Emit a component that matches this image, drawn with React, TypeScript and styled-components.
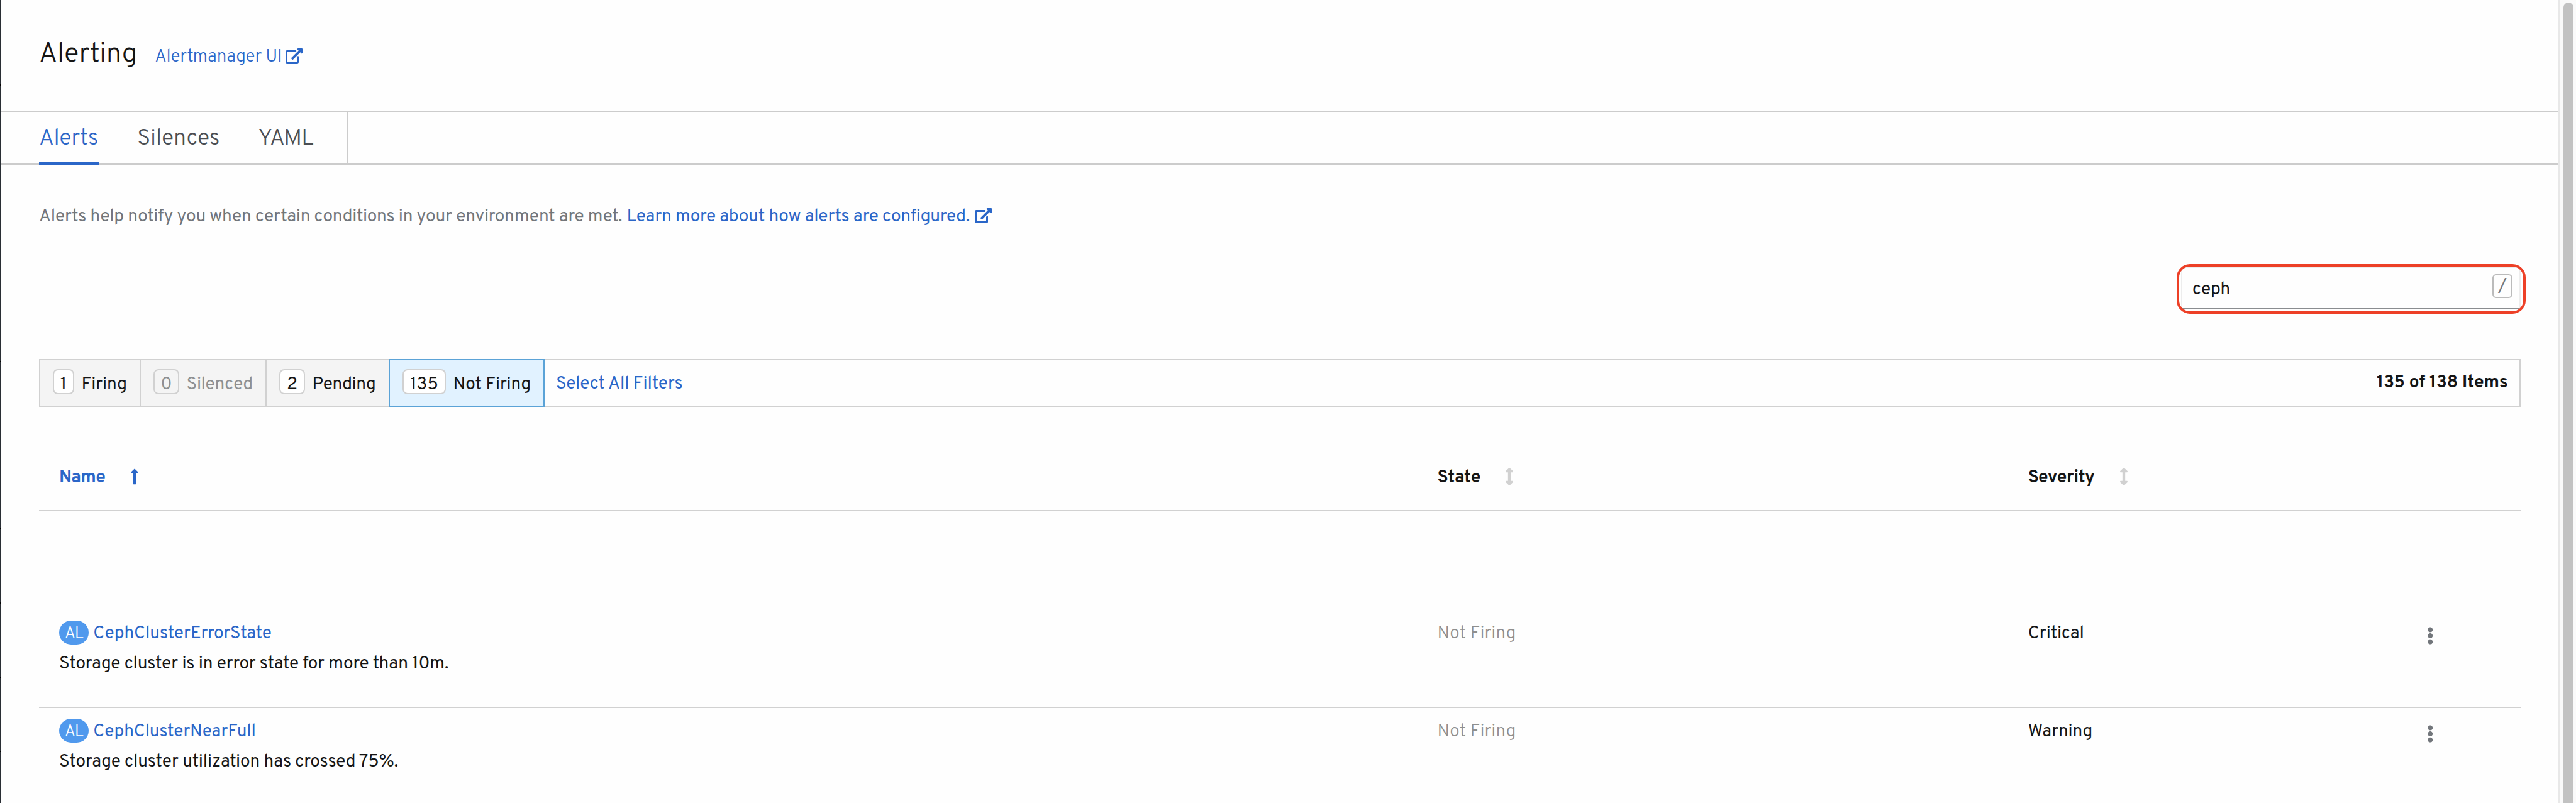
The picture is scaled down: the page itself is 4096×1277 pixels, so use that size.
import React from 'react';
import styled, { createGlobalStyle, css } from 'styled-components';
import { FaArrowsAltV, FaEllipsisV, FaLongArrowAltUp } from 'react-icons/fa';

const color = {
  text: '#151515',
  link: '#2a66c8',
  muted: '#72767b',
  line: '#d1d1d1',
};

const GlobalStyle = createGlobalStyle`
  *, *::before, *::after { box-sizing: border-box; }
  html { overflow: hidden; }
  body {
    margin: 0;
    overflow: hidden;
    background: #fefefe;
    color: ${color.text};
    font-family: Overpass, Roboto, sans-serif;
    font-size: 28px;
    line-height: 40px;
  }
`;

const Page = styled.div`
  display: flex;
  width: 4096px;
  height: 1277px;
  overflow: hidden;
`;

const NavEdge = styled.div`
  display: flex;
  flex-direction: column;
  width: 2px;
  background: #292e34;
`;

const NavDivider = styled.i<{ $gap: number }>`
  height: 2px;
  margin-top: ${p => p.$gap}px;
  background: #030303;
`;

const Main = styled.main`
  flex: 1;
  min-width: 0;
`;

const ScrollTrack = styled.div`
  width: 28px;
  padding: 4px 4px 0 6px;
  border-left: 2px solid #e8e8e8;
  background: #fafafa;
`;

const ScrollThumb = styled.div`
  height: 100%;
  border-radius: 8px 8px 0 0;
  background: #c2c2c2;
`;

const Text = styled.span<{ $track?: number }>`
  white-space: nowrap;
  letter-spacing: ${p => p.$track ?? 0}px;
`;

const Link = styled.a<{ $track?: number; $light?: boolean }>`
  white-space: nowrap;
  color: ${color.link};
  text-decoration: none;
  letter-spacing: ${p => p.$track ?? 0}px;
  font-weight: ${p => (p.$light ? 300 : 400)};
`;

const Header = styled.header`
  display: flex;
  align-items: baseline;
  height: 176px;
  padding: 57px 0 0 60px;
`;

const Title = styled.h1`
  margin: 0 28px 0 0;
  font-size: 44px;
  font-weight: 300;
  line-height: 60px;
  letter-spacing: -0.29px;
`;

const ExternalSvg = styled.svg<{ $gap: number }>`
  width: 27px;
  height: 24px;
  margin-left: ${p => p.$gap}px;
  vertical-align: -3px;
  fill: currentColor;
`;

const ExternalIcon = ({ gap }: { gap: number }) => (
  <ExternalSvg $gap={gap} viewBox="0 0 576 512">
    <path d="M576 24v127.984c0 21.461-25.96 31.98-40.971 16.971l-35.707-35.709-243.523 243.523c-9.373 9.373-24.568 9.373-33.941 0l-22.627-22.627c-9.373-9.373-9.373-24.569 0-33.941L442.756 76.676l-35.703-35.705C391.982 25.9 402.656 0 424.024 0H552c13.255 0 24 10.745 24 24zM407.029 270.794l-16 16A23.999 23.999 0 0 0 384 303.765V448H64V128h264a24.003 24.003 0 0 0 16.97-7.029l16-16C376.089 89.851 365.381 64 344 64H48C21.49 64 0 85.49 0 112v352c0 26.51 21.49 48 48 48h352c26.51 0 48-21.49 48-48V287.764c0-21.382-25.852-32.09-40.971-16.97z" />
  </ExternalSvg>
);

const Tabs = styled.nav`
  display: flex;
  height: 86px;
  padding-left: 60px;
  border-top: 2px solid #ccc;
  border-bottom: 2px solid #ccc;
`;

const Tab = styled.div<{ $active?: boolean; $width: number; $track: number }>`
  width: ${p => p.$width}px;
  height: 84px;
  margin-right: 60px;
  padding-top: 23px;
  font-size: 36px;
  font-weight: 350;
  letter-spacing: ${p => p.$track}px;
  white-space: nowrap;
  color: #4b4e53;
  ${p => p.$active && css`
    color: ${color.link};
    border-bottom: 4px solid ${color.link};
  `}
`;

const TabsEnd = styled.div`
  width: 2px;
  margin-left: -10px;
  background: #ccc;
`;

const Content = styled.section`
  padding: 63px 60px 0 60px;
`;

const Help = styled.p`
  display: flex;
  align-items: baseline;
  gap: 7.4px;
  height: 40px;
  margin: 0;
  color: ${color.muted};
`;

const SearchRow = styled.div`
  display: flex;
  justify-content: flex-end;
  padding-top: 59px;
  margin-bottom: 79px;
`;

const SearchBox = styled.div`
  position: relative;
  display: flex;
  align-items: flex-start;
  justify-content: space-between;
  width: 540px;
  height: 68px;
  padding: 10px 11px 0 16px;
  border: 2px solid #ededed;
  border-bottom-color: #8a8d90;
`;

const Query = styled.span`
  padding-top: 5px;
  letter-spacing: -0.3px;
`;

const SearchOutline = styled.div`
  position: absolute;
  inset: -6px -10px -9px -9px;
  border: 4px solid #ed4027;
  border-radius: 21px;
`;

const KeyHint = styled.kbd`
  width: 32px;
  height: 38px;
  border: 2px solid #bbb;
  border-radius: 6px;
  font: inherit;
  line-height: 36px;
  text-align: center;
  color: ${color.muted};
`;

const FilterBar = styled.div`
  display: flex;
  height: 76px;
  border: 2px solid ${color.line};
`;

const Filter = styled.div<{ $width: number; $selected?: boolean; $disabled?: boolean; $last?: boolean }>`
  display: flex;
  width: ${p => p.$width}px;
  padding: 14px 0 0 20px;
  background: #f4f4f4;
  border-right: ${p => (p.$last ? 0 : 2)}px solid ${color.line};
  color: ${p => (p.$disabled ? '#8e9092' : color.text)};
  ${p => p.$selected && css`
    margin: -2px 0;
    border: 2px solid #5ba3d7;
    background: #e1f2ff;
  `}
`;

const Count = styled.span<{ $width: number; $disabled?: boolean }>`
  width: ${p => p.$width}px;
  height: 40px;
  margin-right: 11.5px;
  padding-top: 3px;
  border: 2px solid ${color.line};
  border-radius: 8px;
  background: ${p => (p.$disabled ? 'transparent' : '#fff')};
  text-align: center;
`;

const FilterLabel = styled.span<{ $track: number }>`
  padding-top: 5px;
  white-space: nowrap;
  letter-spacing: ${p => p.$track}px;
`;

const SelectAll = styled(Link)`
  padding: 17.5px 0 0 18px;
`;

const Total = styled.strong`
  margin-left: auto;
  padding: 15.5px 18.4px 0 0;
  font-weight: 700;
  letter-spacing: -0.13px;
`;

const tableColumns = css`
  display: grid;
  grid-template-columns: 2191.6px 939.1px 634.3px 1fr;
`;

const HeadRow = styled.div`
  ${tableColumns}
  height: 166px;
  padding-top: 93px;
  border-bottom: 2px solid ${color.line};
`;

const HeadCell = styled.div<{ $sorted?: boolean; $gap: number }>`
  display: flex;
  gap: ${p => p.$gap}px;
  padding-left: 32px;
  font-weight: 700;
  color: ${p => (p.$sorted ? color.link : color.text)};

  svg {
    width: 14px;
    height: 28px;
    margin-top: 3.5px;
    color: ${p => (p.$sorted ? color.link : color.line)};
  }
`;

const Row = styled.div<{ $top: number }>`
  ${tableColumns}
  height: 313px;
  padding-top: ${p => p.$top}px;
  border-bottom: 2px solid ${color.line};
  line-height: 48px;
`;

const Cell = styled.div<{ $muted?: boolean }>`
  padding-left: 32px;
  ${p => p.$muted && css`
    color: #8f8f8f;
    font-weight: 300;
  `}

  > svg {
    display: block;
    width: 10.5px;
    height: 28px;
    margin-top: 13px;
    color: ${color.muted};
  }
`;

const NameLine = styled.div`
  display: flex;
  height: 48px;
`;

const Badge = styled.span`
  width: 47px;
  height: 38px;
  margin: 3px 7.3px 0 0;
  padding-top: 2.5px;
  border-radius: 19px;
  background: #5099ed;
  color: #fff;
  font-size: 26px;
  font-weight: 300;
  line-height: 38px;
  letter-spacing: -0.69px;
  text-align: center;
`;

type Alert = {
  name: string;
  nameTrack: number;
  summary: string;
  summaryTrack: number;
  severity: string;
  severityTrack: number;
  top: number;
};

const alerts: Alert[] = [
  {
    name: 'CephClusterErrorState', nameTrack: -0.11,
    summary: 'Storage cluster is in error state for more than 10m.', summaryTrack: -0.17,
    severity: 'Critical', severityTrack: 0.05,
    top: 171,
  },
  {
    name: 'CephClusterNearFull', nameTrack: -0.18,
    summary: 'Storage cluster utilization has crossed 75%.', summaryTrack: -0.12,
    severity: 'Warning', severityTrack: -0.14,
    top: 14,
  },
];

export default function App() {
  return (
    <Page>
      <GlobalStyle />
      <NavEdge>
        <NavDivider $gap={134} />
        <NavDivider $gap={438} />
        <NavDivider $gap={263} />
        <NavDivider $gap={117} />
        <NavDivider $gap={116} />
        <NavDivider $gap={116} />
      </NavEdge>
      <Main>
        <Header>
          <Title>Alerting</Title>
          <Link $light $track={-0.22}>
            Alertmanager UI
            <ExternalIcon gap={6} />
          </Link>
        </Header>
        <Tabs>
          <Tab $active $width={96} $track={-0.48}>Alerts</Tab>
          <Tab $width={132.6} $track={-0.24}>Silences</Tab>
          <Tab $width={90.4} $track={-0.87}>YAML</Tab>
          <TabsEnd />
        </Tabs>
        <Content>
          <Help>
            <Text $track={-0.23}>Alerts help notify you when certain conditions in your environment are met.</Text>
            <Link $track={-0.22}>
              Learn more about how alerts are configured.
              <ExternalIcon gap={7.7} />
            </Link>
          </Help>
          <SearchRow>
            <SearchBox>
              <Query>ceph</Query>
              <KeyHint>/</KeyHint>
              <SearchOutline />
            </SearchBox>
          </SearchRow>
          <FilterBar>
            <Filter $width={160}>
              <Count $width={34}>1</Count>
              <FilterLabel $track={-0.05}>Firing</FilterLabel>
            </Filter>
            <Filter $width={200} $disabled>
              <Count $width={41} $disabled>0</Count>
              <FilterLabel $track={-0.38}>Silenced</FilterLabel>
            </Filter>
            <Filter $width={194} $last>
              <Count $width={41}>2</Count>
              <FilterLabel $track={-0.48}>Pending</FilterLabel>
            </Filter>
            <Filter $width={248} $selected>
              <Count $width={69}>135</Count>
              <FilterLabel $track={-0.13}>Not Firing</FilterLabel>
            </Filter>
            <SelectAll $track={-0.13}>Select All Filters</SelectAll>
            <Total>135 of 138 Items</Total>
          </FilterBar>
          <HeadRow>
            <HeadCell $sorted $gap={40}>
              <Text $track={-0.78}>Name</Text>
              <FaLongArrowAltUp />
            </HeadCell>
            <HeadCell $gap={38.4}>
              <Text $track={-0.16}>State</Text>
              <FaArrowsAltV />
            </HeadCell>
            <HeadCell $gap={39.2}>
              <Text $track={-0.34}>Severity</Text>
              <FaArrowsAltV />
            </HeadCell>
          </HeadRow>
          {alerts.map(a => (
            <Row key={a.name} $top={a.top}>
              <Cell>
                <NameLine>
                  <Badge>AL</Badge>
                  <Link $track={a.nameTrack}>{a.name}</Link>
                </NameLine>
                <Text $track={a.summaryTrack}>{a.summary}</Text>
              </Cell>
              <Cell $muted>
                <Text $track={0.1}>Not Firing</Text>
              </Cell>
              <Cell>
                <Text $track={a.severityTrack}>{a.severity}</Text>
              </Cell>
              <Cell>
                <FaEllipsisV />
              </Cell>
            </Row>
          ))}
        </Content>
      </Main>
      <ScrollTrack>
        <ScrollThumb />
      </ScrollTrack>
    </Page>
  );
}
